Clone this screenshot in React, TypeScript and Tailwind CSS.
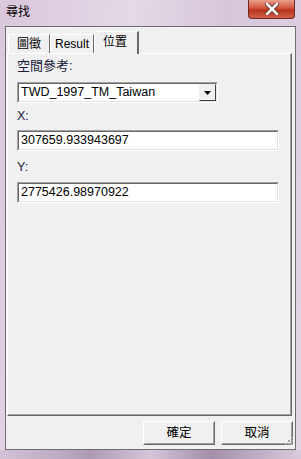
import React from "react";

const font = { fontFamily: '"Liberation Sans", "Noto Sans CJK TC", sans-serif' };

function Sunken({ children, className = "" }: { children?: React.ReactNode; className?: string }) {
  return (
    <div className={`border border-t-[#a0a0a0] border-l-[#a0a0a0] border-b-white border-r-white ${className}`}>
      <div className="h-full border border-t-[#696969] border-l-[#696969] border-b-[#e3e3e3] border-r-[#e3e3e3] bg-white flex items-center">
        {children}
      </div>
    </div>
  );
}

function Button({ label }: { label: string }) {
  return (
    <div className="w-[72px] h-[24px] border border-t-white border-l-white border-b-[#696969] border-r-[#696969]">
      <div className="h-full border border-t-[#f0f0f0] border-l-[#f0f0f0] border-b-[#a0a0a0] border-r-[#a0a0a0] flex items-center justify-center text-[12.5px] text-black">
        {label}
      </div>
    </div>
  );
}

export default function App() {
  return (
    <div
      className="relative w-[301px] h-[459px] overflow-hidden bg-[linear-gradient(100deg,#d9c6dc_0%,#e4d9e6_35%,#d6c6da_60%,#e2d6e5_100%)]"
      style={font}
    >
      {/* title bar */}
      <div className="h-[26px] flex items-center px-[6px] pb-[3px] text-[12px] text-black">尋找</div>
      {/* close button */}
      <div className="absolute left-[248px] top-0 w-[47px] h-[19px] rounded-b-[4px] border border-[#6b2a22] border-t-0 bg-[linear-gradient(#e8a08e_0%,#d4543c_45%,#b8321c_55%,#d0604a_100%)] flex items-center justify-center">
        <svg width="14" height="12" viewBox="0 0 14 12">
          <path d="M2 1 L12 11 M12 1 L2 11" stroke="#4a1c14" strokeWidth="4.2" strokeLinecap="round" />
          <path d="M2 1 L12 11 M12 1 L2 11" stroke="#ffffff" strokeWidth="2.6" strokeLinecap="round" />
        </svg>
      </div>

      {/* client area */}
      <div className="mx-[5px] h-[424px] border border-[#6e6e6e] bg-[#f0f0f0] flex flex-col">
        {/* tab row */}
        <div className="flex items-end h-[26px] pl-[2px] pt-[4px]">
          <div className="w-[42px] h-[19px] border-t border-l border-white border-r border-r-[#696969] flex items-center justify-center text-[12px]">圖徵</div>
          <div className="w-[44px] h-[19px] border-t border-l border-white border-r border-r-[#696969] flex items-center justify-center text-[12px]">Result</div>
          <div className="relative z-10 -mb-[1px] w-[45px] h-[23px] border-t border-l border-white border-r-2 border-r-[#696969] bg-[#f0f0f0] flex items-start pl-[8px] pt-[1px] text-[12px]">位置</div>
        </div>
        {/* panel */}
        <div className="ml-[1px] w-[285px] h-[363px] border border-t-white border-l-white border-b-[#696969] border-r-[#696969] flex flex-col">
          <div className="flex-1 border-r border-b border-r-[#a0a0a0] border-b-[#a0a0a0] pl-[9px] flex flex-col">
            <div className="mt-[4px] h-[16px] leading-[16px] text-[13px] text-[#1a1a3a]">空間參考:</div>
            <Sunken className="mt-[8px] w-[201px] h-[21px]">
              <span className="flex-1 pl-[2px] text-[12.5px] text-black leading-none">TWD_1997_TM_Taiwan</span>
              <div className="w-[17px] h-[17px] border border-t-[#f0f0f0] border-l-[#f0f0f0] border-b-[#404040] border-r-[#404040] bg-[#f0f0f0] flex items-center justify-center">
                <svg width="7" height="4" viewBox="0 0 7 4"><path d="M0 0 H7 L3.5 4 Z" fill="#000" /></svg>
              </div>
            </Sunken>
            <div className="mt-[5px] h-[16px] leading-[16px] text-[12.5px] text-[#1a1a4a]">X:</div>
            <Sunken className="mt-[6px] w-[262px] h-[21px]">
              <span className="pl-[2px] text-[12.5px] text-black leading-none">307659.933943697</span>
            </Sunken>
            <div className="mt-[8px] h-[16px] leading-[16px] text-[12.5px] text-[#1a1a4a]">Y:</div>
            <Sunken className="mt-[7px] w-[262px] h-[21px]">
              <span className="pl-[2px] text-[12.5px] text-black leading-none">2775426.98970922</span>
            </Sunken>
          </div>
        </div>
        {/* buttons */}
        <div className="relative flex-1 flex justify-end items-start pt-[5px] pr-[2px] gap-[6px]">
          <Button label="確定" />
          <Button label="取消" />
          <svg className="absolute right-[2px] bottom-[2px]" width="10" height="10" viewBox="0 0 10 10">
            <g fill="#a0a0a0">
              <rect x="8" y="0" width="2" height="2" />
              <rect x="5" y="3" width="2" height="2" />
              <rect x="8" y="3" width="2" height="2" />
              <rect x="2" y="6" width="2" height="2" />
              <rect x="5" y="6" width="2" height="2" />
              <rect x="8" y="6" width="2" height="2" />
            </g>
          </svg>
        </div>
      </div>
      {/* bottom frame shading */}
      <div className="h-[9px] bg-[linear-gradient(90deg,#cbb6cf,#8e7597_30%,#d5c4d9_50%,#7d6488_70%,#d2c2d6)] opacity-60" />
    </div>
  );
}
